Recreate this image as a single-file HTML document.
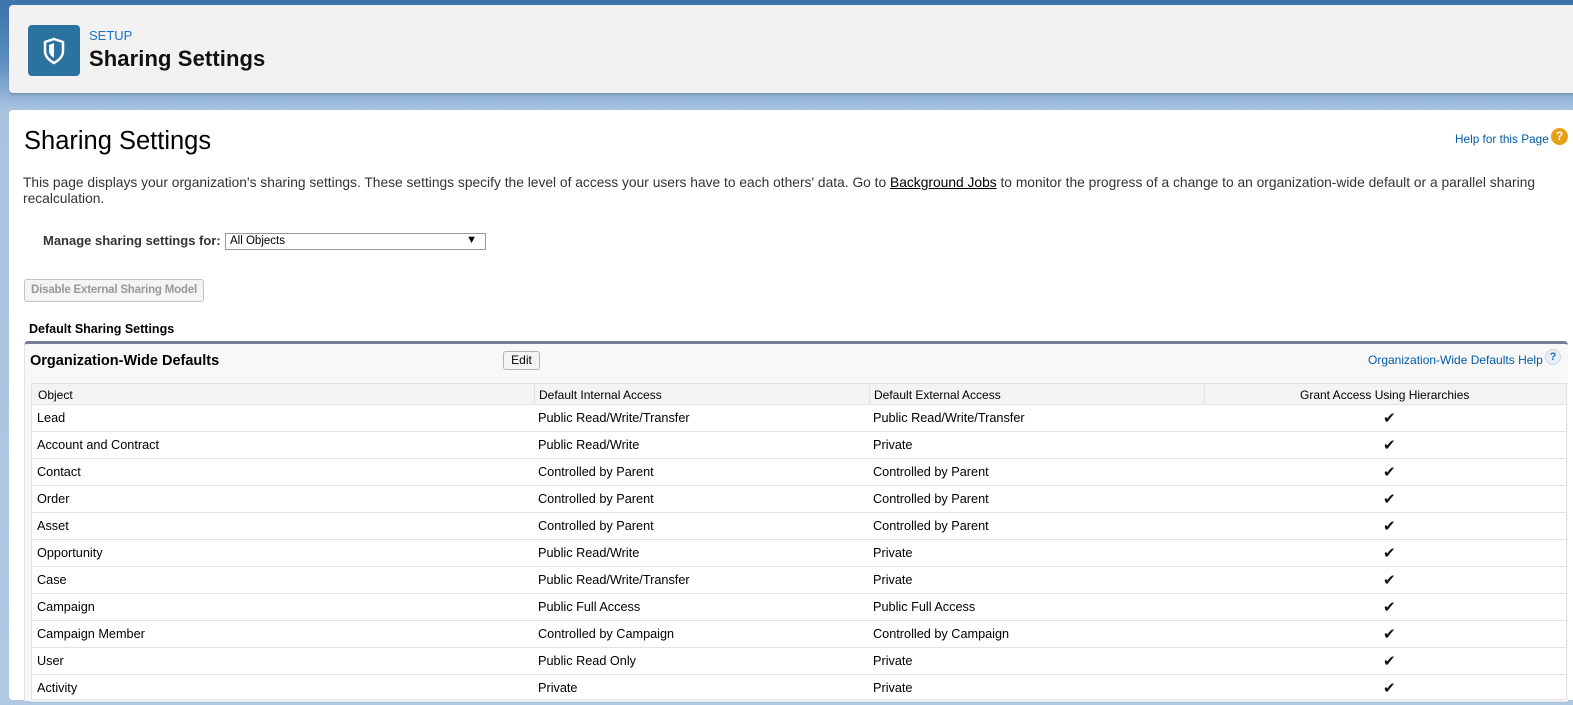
<!DOCTYPE html>
<html><head><meta charset="utf-8"><style>
*{margin:0;padding:0;box-sizing:border-box}
body{width:1573px;height:705px;overflow:hidden;background:linear-gradient(#3d73aa,#5a8cc0 60px,#a9c3df 110px,#b0c8e2);font-family:"Liberation Sans",Arial,sans-serif;position:relative}
.hdr{position:absolute;left:9px;top:5px;width:1570px;height:88px;background:#f3f2f2;border-radius:4px;box-shadow:0 2px 2px rgba(0,0,0,.15)}
.ico{position:absolute;left:19px;top:20px;width:52px;height:51px;background:#2b729f;border-radius:4px}
.setup{position:absolute;left:80px;top:23px;font-size:13px;color:#1b72c4}
.ht{position:absolute;left:80px;top:41px;font-size:22px;font-weight:bold;color:#111;letter-spacing:.1px}
.main{position:absolute;left:9px;top:110px;width:1570px;height:590px;background:#fff;border-radius:4px}
.a{position:absolute;white-space:nowrap}
.row{position:absolute;left:31px;width:1536px;height:27px;border-bottom:1px solid #e3e3e3;font-size:12.7px;color:#000}
.row span{position:absolute;top:6px}
.c1{left:6px}.c2{left:507px}.c3{left:842px}.c4{left:1352px;font-size:15px;top:4px!important;color:#111}
</style></head><body>
<div class="hdr">
<div class="ico"><svg width="52" height="51" viewBox="0 0 52 51"><path d="M26 14 L35 17 L35 26 Q35 33 26 38 Q17 33 17 26 L17 17 Z" fill="none" stroke="#fff" stroke-width="2.5"/><path d="M26 18 L26 33 Q21 30 21 26 L21 20 Z" fill="#fff"/></svg></div>
<div class="setup">SETUP</div>
<div class="ht">Sharing Settings</div>
</div>
<div class="main">
<div class="a" style="left:15px;top:17px;font-size:25.5px;color:#000">Sharing Settings</div>
<div class="a" style="left:1446px;top:22px;font-size:11.8px;color:#015ba7">Help for this Page</div>
<div class="a" style="left:1542px;top:18px;width:17px;height:17px;border-radius:50%;background:#e7a016;color:#fff;font-size:12px;font-weight:bold;text-align:center;line-height:17px">?</div>
<div class="a" style="left:14px;top:65px;font-size:13.8px;color:#333;line-height:16px;white-space:normal;width:1535px">This page displays your organization's sharing settings. These settings specify the level of access your users have to each others' data. Go to <u style="color:#000">Background Jobs</u> to monitor the progress of a change to an organization-wide default or a parallel sharing recalculation.</div>
<div class="a" style="left:34px;top:123px;font-size:13px;font-weight:bold;color:#333">Manage sharing settings for:</div>
<div class="a" style="left:216px;top:123px;width:261px;height:17px;border:1px solid #999;font-size:11.5px;padding:1px 4px;color:#000">All Objects<span style="position:absolute;right:8px;top:0px;font-size:11px">▼</span></div>
<div class="a" style="left:15px;top:169px;width:180px;height:23px;border:1px solid #c4c4c4;border-radius:3px;background:#f4f4f4;font-size:11.5px;font-weight:bold;color:#999;text-align:center;line-height:21px;letter-spacing:-.2px">Disable External Sharing Model</div>
<div class="a" style="left:20px;top:212px;font-size:12.5px;font-weight:bold;color:#000">Default Sharing Settings</div>
<div class="a" style="left:15px;top:231px;width:1544px;height:360px;background:#f8f8f8;border-top:3px solid #747e96;border-left:1px solid #e0e3e5;border-radius:4px 4px 0 0"></div>
<div class="a" style="left:21px;top:243px;font-size:14.5px;font-weight:bold;color:#000">Organization-Wide Defaults</div>
<div class="a" style="left:494px;top:241px;width:37px;height:19px;border:1px solid #b5b5b5;border-radius:3px;background:#f4f4f4;font-size:12px;text-align:center;line-height:17px">Edit</div>
<div class="a" style="left:1359px;top:243px;font-size:12px;color:#015ba7">Organization-Wide Defaults Help</div>
<div class="a" style="left:1536px;top:239px;width:16px;height:16px;border-radius:50%;background:#e8eef6;border:1px solid #c9d6e6;color:#2670c0;font-size:11px;font-weight:bold;text-align:center;line-height:14px">?</div>
<div class="a" style="left:22px;top:273px;width:1536px;height:317px;background:#fff;border:1px solid #e0e3e5"></div>
<div class="a" style="left:22px;top:273px;width:1536px;height:22px;background:#f2f3f3;border:1px solid #e0e3e5;font-size:12px;color:#000">
<span style="position:absolute;left:6px;top:4px">Object</span>
<span style="position:absolute;left:502px;top:0;height:21px;border-left:1px solid #e0e3e5"></span><span style="position:absolute;left:507px;top:4px">Default Internal Access</span>
<span style="position:absolute;left:837px;top:0;height:21px;border-left:1px solid #e0e3e5"></span><span style="position:absolute;left:842px;top:4px">Default External Access</span>
<span style="position:absolute;left:1172px;top:0;height:21px;border-left:1px solid #e0e3e5"></span><span style="position:absolute;left:1268px;top:4px">Grant Access Using Hierarchies</span>
</div>
</div>
<div style="position:absolute;left:0;top:0">
<div class="row" style="top:405px"><span class="c1">Lead</span><span class="c2">Public Read/Write/Transfer</span><span class="c3">Public Read/Write/Transfer</span><span class="c4">✔</span></div>
<div class="row" style="top:432px"><span class="c1">Account and Contract</span><span class="c2">Public Read/Write</span><span class="c3">Private</span><span class="c4">✔</span></div>
<div class="row" style="top:459px"><span class="c1">Contact</span><span class="c2">Controlled by Parent</span><span class="c3">Controlled by Parent</span><span class="c4">✔</span></div>
<div class="row" style="top:486px"><span class="c1">Order</span><span class="c2">Controlled by Parent</span><span class="c3">Controlled by Parent</span><span class="c4">✔</span></div>
<div class="row" style="top:513px"><span class="c1">Asset</span><span class="c2">Controlled by Parent</span><span class="c3">Controlled by Parent</span><span class="c4">✔</span></div>
<div class="row" style="top:540px"><span class="c1">Opportunity</span><span class="c2">Public Read/Write</span><span class="c3">Private</span><span class="c4">✔</span></div>
<div class="row" style="top:567px"><span class="c1">Case</span><span class="c2">Public Read/Write/Transfer</span><span class="c3">Private</span><span class="c4">✔</span></div>
<div class="row" style="top:594px"><span class="c1">Campaign</span><span class="c2">Public Full Access</span><span class="c3">Public Full Access</span><span class="c4">✔</span></div>
<div class="row" style="top:621px"><span class="c1">Campaign Member</span><span class="c2">Controlled by Campaign</span><span class="c3">Controlled by Campaign</span><span class="c4">✔</span></div>
<div class="row" style="top:648px"><span class="c1">User</span><span class="c2">Public Read Only</span><span class="c3">Private</span><span class="c4">✔</span></div>
<div class="row" style="top:675px"><span class="c1">Activity</span><span class="c2">Private</span><span class="c3">Private</span><span class="c4">✔</span></div>
</div>
</body></html>
